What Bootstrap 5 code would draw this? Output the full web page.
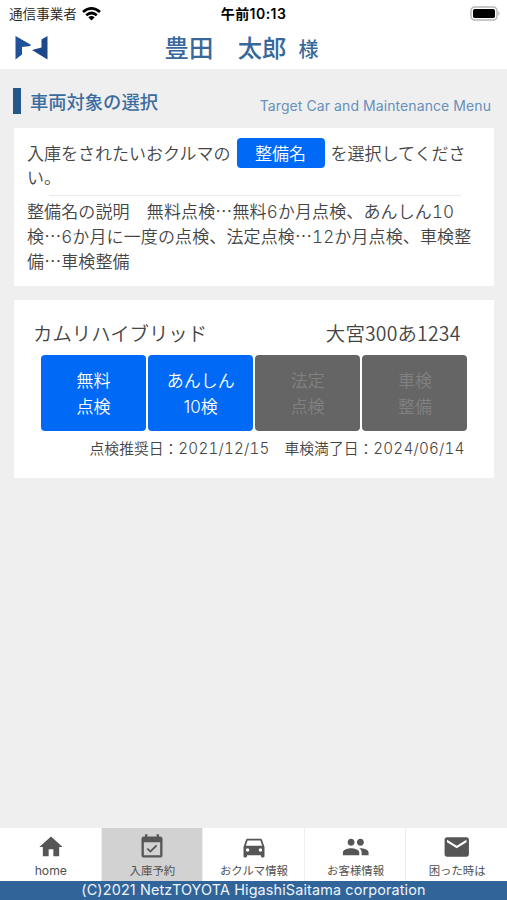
<!DOCTYPE html>
<html lang="ja">
<head>
<meta charset="utf-8">
<meta name="viewport" content="width=device-width, initial-scale=1">
<title>車両対象の選択</title>
<link href="https://cdn.jsdelivr.net/npm/bootstrap@5.3.0/dist/css/bootstrap.min.css" rel="stylesheet">
<style>
body{background:#efefef;color:#444;font-family:Inter,"Noto Sans CJK JP",sans-serif;font-size:17px;line-height:24.5px;overflow:hidden}
svg{display:block}
.jp{font-family:"Noto Sans CJK JP",sans-serif}
.thin{font-weight:350}
.status{height:27px;padding:0 6px 0 9px;color:#000;font-size:13.6px;line-height:27px}
.status-time{font-size:14px;font-weight:600;letter-spacing:.45px;white-space:nowrap}
.carrier{color:#222;font-weight:350}
.brand-row{height:42px;padding:0 15px}
.owner{color:#38689b;font-size:24.4px;font-weight:500;line-height:40px;white-space:pre;margin-left:-12px;margin-top:-1px}
.honor{font-size:20px;margin-left:12px}
.head{height:59px;padding:19px 16px 0 13px}
.head-mark{width:8px;height:26px;background:#235788}
.head-title{color:#3c6c9e;font-size:18.3px;font-weight:500;line-height:26px;padding-left:9px}
.head-sub{color:#6790bc;font-size:14px;line-height:20px;padding-top:8px;white-space:nowrap;letter-spacing:.08px}
.panel{background:#fff;margin:0 13.5px 14px 14px}
.intro{height:158px;padding:10px 13px 0}
.intro-line{height:30px;white-space:nowrap;margin-bottom:-2px}
.intro-line>span:not(.tag){padding-top:2px}
.tag{width:88px;height:30px;background:#006af6;color:#fff;border-radius:4px;line-height:32px;margin:0 6px;text-align:center}
.rule{height:1px;background:#eaeaea;margin:4px 20px 3px 22px}
.note{white-space:nowrap;letter-spacing:.12px;font-variant-numeric:tabular-nums;line-height:24.4px}
.car{height:178px;padding:18px 26px 0 27px}
.car-name{font-size:19.4px;line-height:29px;margin:0 7px 8px -8px}
.plate{letter-spacing:.2px}
.svc{width:105px;height:76px;background:#006af6;color:#fff;border:0;border-radius:4px;font-size:17px;line-height:26px;padding:2px 0 0}
.svc:disabled{background:#656565;color:#818181;opacity:1;border:0}
.svc:hover{background:#0060df;color:#fff}
.dates{font-size:14.8px;line-height:20px;margin-top:8px;padding-right:3px;gap:15px;white-space:nowrap}
.day{font-size:15.2px;letter-spacing:.2px;font-variant-numeric:tabular-nums}
.tabs{height:53px;background:#fff;color:#505050}
.tab{border-right:1px solid #eee;font-size:11.4px;line-height:16px;padding:5px 0 0 1px}
.tab:last-child{border:0}
.tab.active{background:#d2d2d2}
.tab svg{width:28px;height:28px;fill:#565656;margin-bottom:2px}
.tab svg.wide{width:29.5px}
.home-label{font-size:12.2px}
.foot{height:19px;background:#31659a;color:#eef4fb;font-size:14.4px;line-height:18px;white-space:nowrap;letter-spacing:.14px}
</style>
</head>
<body>
<div class="d-flex flex-column vh-100">
  <header class="bg-white">
    <div class="status d-flex align-items-center position-relative">
      <span class="carrier jp">通信事業者</span>
      <svg class="ms-1" width="21" height="16" viewBox="0 0 21 16"><g fill="none" stroke="#000" stroke-width="2.7"><path d="M2 6.1Q10.5-1.5 19 6.1M5.2 9.3Q10.5 4.7 15.8 9.3"/></g><path d="M7.3 11.2Q10.5 8.7 13.7 11.2L10.5 14.6Z"/></svg>
      <span class="status-time position-absolute start-50 translate-middle-x">午前10:13</span>
      <svg class="ms-auto" width="31" height="15" viewBox="0 0 31 15"><rect x="1" y="1" width="26" height="13" rx="3.8" fill="#fff" stroke="#b5b5b5" stroke-width="1.4"/><rect x="3" y="3" width="22" height="9" rx="1.8"/><path d="M28.4 5q2.2 2.5 0 5z" fill="#aaa"/></svg>
    </div>
    <div class="brand-row d-flex align-items-center position-relative">
      <svg width="34" height="24" viewBox="0 0 34 24"><path fill="#1f5299" d="M.5 0 15.5 8.5V10L7 11V18.5L.5 23.500Z"/><path fill="#1c488a" d="M32.500 0 26.500 3.500V11.500L17 14 32.500 23.500Z"/></svg>
      <div class="owner jp position-absolute start-50 translate-middle-x">豊田　太郎<span class="honor">様</span></div>
    </div>
  </header>

  <main class="flex-grow-1">
    <div class="head d-flex">
      <div class="head-mark"></div>
      <div class="head-title jp">車両対象の選択</div>
      <div class="head-sub ms-auto">Target Car and Maintenance Menu</div>
    </div>

    <section class="panel intro thin">
      <div class="intro-line d-flex align-items-center"><span>入庫をされたいおクルマの</span><span class="tag">整備名</span><span>を選択してくださ</span></div>
      <div>い。</div>
      <div class="rule"></div>
      <div class="note">整備名の説明　無料点検<span class="jp">…</span>無料6か月点検、あんしん10</div>
      <div class="note">検<span class="jp">…</span>6か月に一度の点検、法定点検<span class="jp">…</span>12か月点検、車検整</div>
      <div class="note">備<span class="jp">…</span>車検整備</div>
    </section>

    <section class="panel car thin">
      <div class="car-name jp d-flex justify-content-between"><span>カムリハイブリッド</span><span class="plate">大宮300あ1234</span></div>
      <div class="d-flex justify-content-between">
        <button class="btn svc thin">無料<br>点検</button>
        <button class="btn svc thin">あんしん<br>10検</button>
        <button class="btn svc thin" disabled>法定<br>点検</button>
        <button class="btn svc thin" disabled>車検<br>整備</button>
      </div>
      <div class="dates d-flex justify-content-end"><span>点検推奨日：<span class="day">2021/12/15</span></span><span>車検満了日：<span class="day">2024/06/14</span></span></div>
    </section>
  </main>

  <nav class="tabs d-flex">
    <div class="tab col d-flex flex-column align-items-center"><svg viewBox="0 0 24 24"><path d="M10 20v-6h4v6h5v-8h3L12 3 2 12h3v8z"/></svg><span class="home-label">home</span></div>
    <div class="tab col active d-flex flex-column align-items-center"><svg viewBox="0 0 24 24"><path d="M16.530 11.060 15.470 10l-4.880 4.880-2.120-2.120-1.060 1.060L10.590 17zM19 3h-1V1h-2v2H8V1H6v2H5a2 2 0 0 0-2 2v14c0 1.100.9 2 2 2h14c1.100 0 2-.9 2-2V5c0-1.100-.9-2-2-2zm0 16H5V8h14z"/></svg>入庫予約</div>
    <div class="tab col d-flex flex-column align-items-center"><svg viewBox="0 0 24 24"><path d="M18.920 6.010C18.720 5.420 18.160 5 17.500 5h-11c-.66 0-1.210.42-1.420 1.010L3 12v8c0 .55.45 1 1 1h1c.55 0 1-.45 1-1v-1h12v1c0 .55.45 1 1 1h1c.55 0 1-.45 1-1v-8zM6.500 16a1.500 1.500 0 1 1 0-3 1.500 1.500 0 0 1 0 3zm11 0a1.500 1.500 0 1 1 0-3 1.500 1.500 0 0 1 0 3zM5 11l1.500-4.500h11L19 11z"/></svg>おクルマ情報</div>
    <div class="tab col d-flex flex-column align-items-center"><svg class="wide" viewBox="0.5 0 23 24"><path d="M16 11c1.660 0 2.990-1.340 2.990-3S17.660 5 16 5s-3 1.340-3 3 1.340 3 3 3zm-8 0c1.660 0 2.990-1.340 2.990-3S9.660 5 8 5 5 6.340 5 8s1.340 3 3 3zm0 2c-2.330 0-7 1.170-7 3.500V19h14v-2.500c0-2.330-4.670-3.500-7-3.500zm8 0c-.29 0-.62.02-.97.05 1.160.84 1.970 1.970 1.970 3.450V19h6v-2.500c0-2.330-4.670-3.500-7-3.500z"/></svg>お客様情報</div>
    <div class="tab col d-flex flex-column align-items-center"><svg class="wide" viewBox="0.5 0.5 23 23"><path d="M20 4H4c-1.100 0-1.990.9-1.990 2L2 18c0 1.100.9 2 2 2h16c1.100 0 2-.9 2-2V6c0-1.100-.9-2-2-2zm0 4-8 5-8-5V6l8 5 8-5z"/></svg>困った時は</div>
  </nav>
  <footer class="foot text-center">(C)2021 NetzTOYOTA HigashiSaitama corporation</footer>
</div>
<script src="https://cdn.jsdelivr.net/npm/bootstrap@5.3.0/dist/js/bootstrap.bundle.min.js"></script>
</body>
</html>
